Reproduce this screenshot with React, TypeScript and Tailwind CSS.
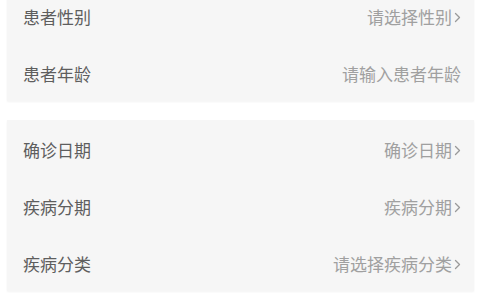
import React from "react";

const Chevron = () => (
  <svg width="7" height="11" viewBox="0 0 7 11" className="ml-[2px]" fill="none">
    <path d="M1.5 1.5 L5.5 5.5 L1.5 9.5" stroke="#9a9a9a" strokeWidth="1.3" strokeLinecap="round" strokeLinejoin="round" />
  </svg>
);

type Row = { label: string; value: string; arrow: boolean };

const card1: Row[] = [
  { label: "患者性别", value: "请选择性别", arrow: true },
  { label: "患者年龄", value: "请输入患者年龄", arrow: false },
];
const card2: Row[] = [
  { label: "确诊日期", value: "确诊日期", arrow: true },
  { label: "疾病分期", value: "疾病分期", arrow: true },
  { label: "疾病分类", value: "请选择疾病分类", arrow: true },
];

const RowItem = ({ r }: { r: Row }) => (
  <div className="flex h-[57px] items-center justify-between pl-[16px] pr-[13px] pt-[3px]">
    <span className="text-[17px] text-[#5e5e5e]">{r.label}</span>
    <span className="flex items-center text-[17px] text-[#a0a0a0]">
      {r.value}
      {r.arrow && <Chevron />}
    </span>
  </div>
);

export default function App() {
  return (
    <div
      className="h-[295px] w-[480px] overflow-hidden bg-white"
      style={{ fontFamily: '"Noto Sans CJK SC", "Noto Sans", sans-serif' }}
    >
      <div className="mx-[7px] mt-[-13px] w-[467px] bg-[#f6f6f6] shadow-[0_1px_2px_rgba(0,0,0,0.05)]">
        {card1.map((r) => (
          <RowItem key={r.label} r={r} />
        ))}
      </div>
      <div className="mx-[7px] mt-[19px] w-[467px] bg-[#f6f6f6] shadow-[0_1px_2px_rgba(0,0,0,0.05)]">
        {card2.map((r) => (
          <RowItem key={r.label} r={r} />
        ))}
      </div>
    </div>
  );
}
